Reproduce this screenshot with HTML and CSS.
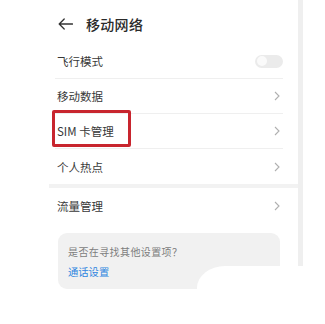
FILE: index.html
```html
<!DOCTYPE html>
<html lang="zh-CN">
<head>
<meta charset="utf-8">
<link rel="stylesheet" href="styles.css">
</head>
<body>
<div class="screen">
  <div class="main">
    <div class="header">
      <svg class="back" width="15" height="12" viewBox="0 0 15 12"><path d="M14.5 6H1.2M6.2 1L1.2 6l5 5" fill="none" stroke="#333" stroke-width="1.3" stroke-linecap="round" stroke-linejoin="round"/></svg>
      <span class="title">移动网络</span>
    </div>
    <div class="list">
      <div class="row"><span>飞行模式</span><span class="toggle"><span class="knob"></span></span></div>
      <div class="row"><span>移动数据</span><svg class="chev" width="6" height="10" viewBox="0 0 6 10"><path d="M1 1l4 4-4 4" fill="none" stroke="#b0b0b0" stroke-width="1.1"/></svg></div>
      <div class="row sim"><span>SIM 卡管理</span><svg class="chev" width="6" height="10" viewBox="0 0 6 10"><path d="M1 1l4 4-4 4" fill="none" stroke="#b0b0b0" stroke-width="1.1"/></svg><span class="mark"></span></div>
      <div class="row last"><span>个人热点</span><svg class="chev" width="6" height="10" viewBox="0 0 6 10"><path d="M1 1l4 4-4 4" fill="none" stroke="#b0b0b0" stroke-width="1.1"/></svg></div>
    </div>
    <div class="band"></div>
    <div class="list">
      <div class="row last tall"><span>流量管理</span><svg class="chev" width="6" height="10" viewBox="0 0 6 10"><path d="M1 1l4 4-4 4" fill="none" stroke="#b0b0b0" stroke-width="1.1"/></svg></div>
    </div>
    <div class="card">
      <div class="hint">是否在寻找其他设置项？</div>
      <div class="link">通话设置</div>
    </div>
  </div>
  <div class="strip"></div>
  <div class="blob"></div>
</div>
</body>
</html>
```
FILE: styles.css
```css
html, body {
  margin: 0;
  padding: 0;
  background: #fff;
}
.screen {
  position: relative;
  width: 325px;
  height: 324px;
  overflow: hidden;
  display: flex;
  font-family: "Noto Sans CJK SC", "Noto Sans", sans-serif;
  color: #333;
}
.main {
  width: 298px;
}
.strip {
  width: 5px;
  height: 267px;
  background: #efefef;
}
.header {
  height: 44px;
  display: flex;
  align-items: center;
  padding-left: 58px;
  padding-top: 3px;
  box-sizing: border-box;
}
.back {
  display: block;
}
.title {
  margin-left: 13px;
  font-size: 14px;
  font-weight: 500;
  color: #2a2a2a;
  letter-spacing: 0.3px;
}
.list {
  margin-left: 55px;
  width: 228px;
}
.row {
  position: relative;
  height: 34px;
  border-bottom: 1px solid #efefef;
  display: flex;
  align-items: center;
  justify-content: space-between;
  padding: 0 3px 0 2px;
  font-size: 11.5px;
  color: #383838;
}
.row.last {
  border-bottom: none;
  height: 35px;
}
.row.tall {
  height: 36px;
}
.chev {
  display: block;
}
.toggle {
  position: relative;
  width: 28px;
  height: 13px;
  border-radius: 7px;
  background: #ebebeb;
  margin-right: -3px;
}
.knob {
  position: absolute;
  left: 1.5px;
  top: 1.5px;
  width: 10px;
  height: 10px;
  border-radius: 50%;
  background: #fafafa;
}
.mark {
  position: absolute;
  left: -3px;
  top: -4px;
  width: 73px;
  height: 31px;
  border: 3px solid #c8252e;
  border-radius: 2px;
}
.band {
  margin-left: 49px;
  width: 249px;
  height: 4px;
  background: #f2f2f2;
}
.card {
  margin: 9px 0 0 58px;
  width: 222px;
  height: 56px;
  box-sizing: border-box;
  padding: 12px 0 0 10px;
  background: #f1f1f1;
  border-radius: 9px;
}
.hint {
  font-size: 10px;
  line-height: 14px;
  color: #7d7d7d;
  letter-spacing: 0.4px;
}
.link {
  margin-top: 6px;
  font-size: 10.3px;
  line-height: 14px;
  color: #2f86e0;
}
.blob {
  position: absolute;
  left: 197px;
  top: 266px;
  right: 0;
  bottom: 0;
  background: #fff;
  border-top-left-radius: 28px 22px;
}
```
